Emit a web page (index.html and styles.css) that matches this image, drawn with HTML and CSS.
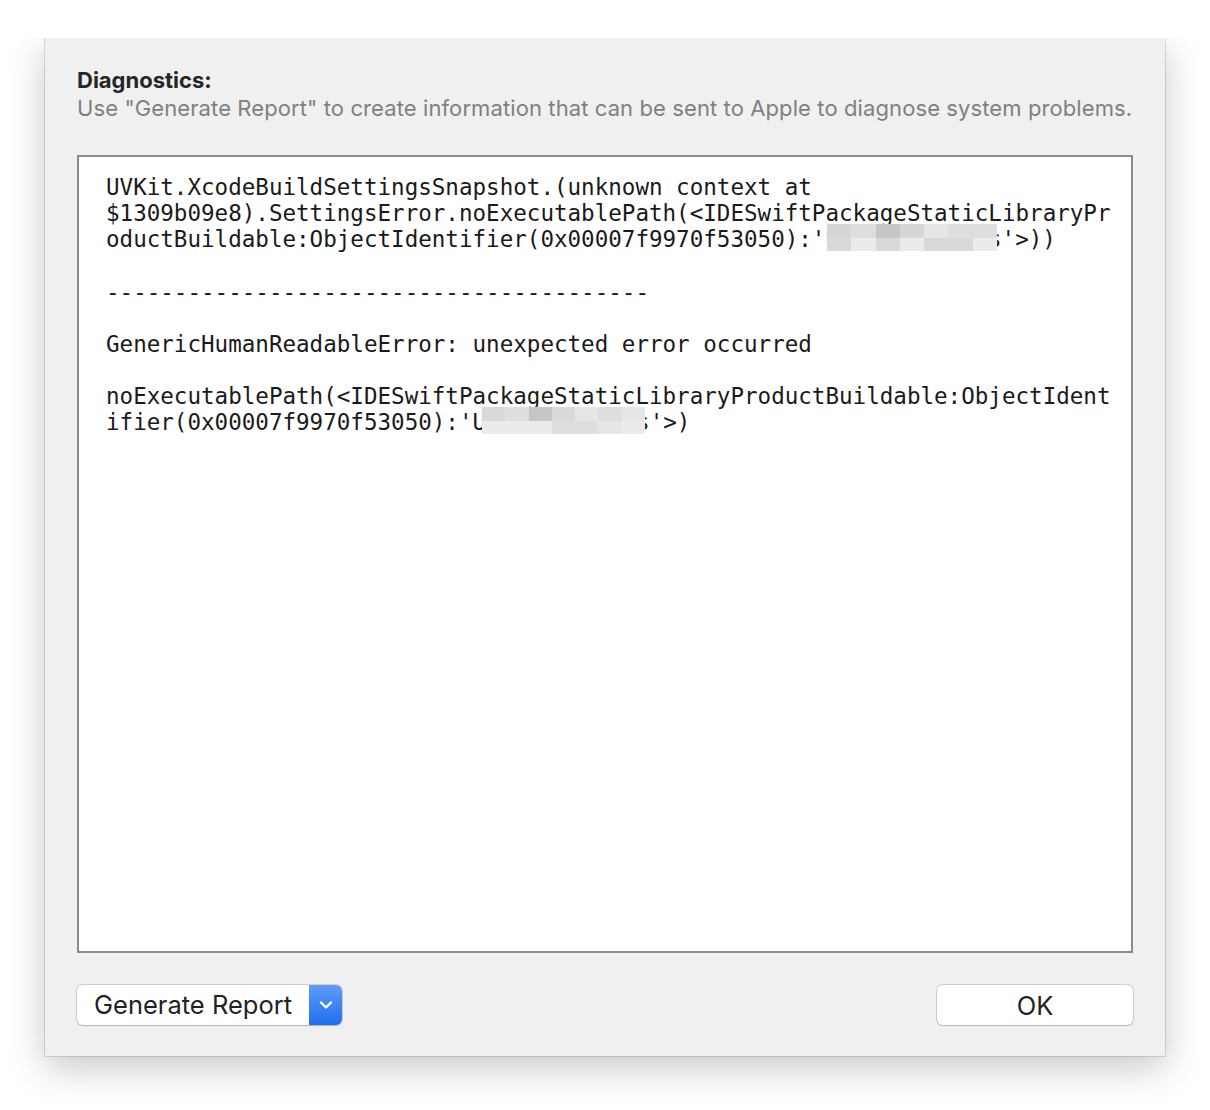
FILE: index.html
```html
<!DOCTYPE html>
<html lang="en">
<head>
  <meta charset="UTF-8">
  <title>Diagnostics</title>
  <link rel="stylesheet" href="styles.css">
</head>
<body>

<div class="dialog">
  <div class="header">
    <h2 class="title">Diagnostics:</h2>
    <p class="subtitle">Use "Generate Report" to create information that can be sent to Apple to diagnose system problems.</p>
  </div>

  <!-- Error details -->
  <div class="details">
<pre class="log">UVKit.XcodeBuildSettingsSnapshot.(unknown context at
$1309b09e8).SettingsError.noExecutablePath(&lt;IDESwiftPackageStaticLibraryPr
oductBuildable:ObjectIdentifier(0x00007f9970f53050):'U<span class="redact r1"><i class="c1"></i><i class="c2"></i><i class="c3"></i><i class="c1"></i><i class="c4"></i><i class="c2"></i><i class="c2"></i><i class="c5"></i><i class="c6"></i><i class="c5"></i><i class="c6"></i><i class="c5"></i><i class="c5"></i><i class="c6"></i></span>s'&gt;))

----------------------------------------

GenericHumanReadableError: unexpected error occurred

noExecutablePath(&lt;IDESwiftPackageStaticLibraryProductBuildable:ObjectIdent
ifier(0x00007f9970f53050):'U<span class="redact r2"><i class="c5"></i><i class="c2"></i><i class="c3"></i><i class="c5"></i><i class="c4"></i><i class="c2"></i><i class="c4"></i><i class="c6"></i><i class="c6"></i><i class="c6"></i><i class="c2"></i><i class="c2"></i><i class="c4"></i><i class="c6"></i></span>s'&gt;)</pre>
  </div>

  <div class="footer">
    <div class="popup">
      <span class="popup-label">Generate Report</span>
      <span class="popup-arrow">
        <svg width="16" height="10" viewBox="0 0 16 10"><path d="M3 2.5 L8 7.5 L13 2.5" fill="none" stroke="#fff" stroke-width="2.4" stroke-linecap="round" stroke-linejoin="round"/></svg>
      </span>
    </div>
    <button class="button">OK</button>
  </div>
</div>

</body>
</html>
```

FILE: styles.css
```css
body {
  margin: 0;
  padding: 38px 0 54px 45px;
  background-color: #fff;
  font-family: Inter, "Liberation Sans", Arial, sans-serif;
}
.dialog {
  width: 1120px;
  height: 1018px;
  background-color: #f0f0f0;
  box-sizing: border-box;
  padding: 0 32px;
  display: flex;
  flex-direction: column;
  box-shadow: 0 0 0 1px rgba(0, 0, 0, 0.12), 0 12px 36px rgba(0, 0, 0, 0.22);
  clip-path: inset(0 -60px -70px -60px);
}
.header {
  padding-top: 28px;
}
.title {
  margin: 0;
  font-size: 22px;
  font-weight: 700;
  color: #262626;
  line-height: 28px;
}
.subtitle {
  margin: 0;
  font-size: 22px;
  color: #808080;
  line-height: 28px;
  letter-spacing: 0.1px;
}
.details {
  margin-top: 33px;
  height: 798px;
  box-sizing: border-box;
  background-color: #fff;
  border: 2px solid #8b8b8b;
  padding: 17px 0 0 27px;
}
.log {
  margin: 0;
  font-family: "DejaVu Sans Mono", "Liberation Mono", monospace;
  font-size: 22.55px;
  line-height: 26px;
  color: #1a1a1a;
  white-space: pre;
}
.redact {
  display: inline-flex;
  flex-wrap: wrap;
  vertical-align: top;
  height: 27px;
  position: relative;
  top: -2px;
}
.r1 {
  width: 170px;
  margin: 0 -9px 0 -12px;
}
.r2 {
  width: 163px;
  margin: 0 -9px 0 -4px;
}
.redact i {
  display: block;
  height: 13.5px;
  flex: 0 0 14.28%;
}
.c1 { background: #d6d6d6; }
.c2 { background: #dedede; }
.c3 { background: #c6c6c6; }
.c4 { background: #e6e6e6; }
.c5 { background: #d9d9d9; }
.c6 { background: #ebebeb; }
.footer {
  margin-top: 32px;
  display: flex;
  justify-content: space-between;
}
.popup {
  display: flex;
  height: 40px;
  width: 265px;
  box-sizing: border-box;
  border-radius: 6px;
  background-color: #fff;
  box-shadow: 0 0 0 1px rgba(0, 0, 0, 0.14), 0 1px 1px rgba(0, 0, 0, 0.12);
  overflow: hidden;
}
.popup-label {
  flex: 1;
  font-size: 25.5px;
  line-height: 40px;
  color: #222;
  padding-left: 17px;
}
.popup-arrow {
  width: 33px;
  display: flex;
  align-items: center;
  justify-content: center;
  background: linear-gradient(#5f9cf8, #1f6ef0);
}
.button {
  width: 196px;
  height: 40px;
  border: none;
  border-radius: 6px;
  background-color: #fff;
  box-shadow: 0 0 0 1px rgba(0, 0, 0, 0.14), 0 1px 1px rgba(0, 0, 0, 0.12);
  font-family: Inter, "Liberation Sans", Arial, sans-serif;
  font-size: 25.5px;
  color: #222;
  padding: 0;
}
```
